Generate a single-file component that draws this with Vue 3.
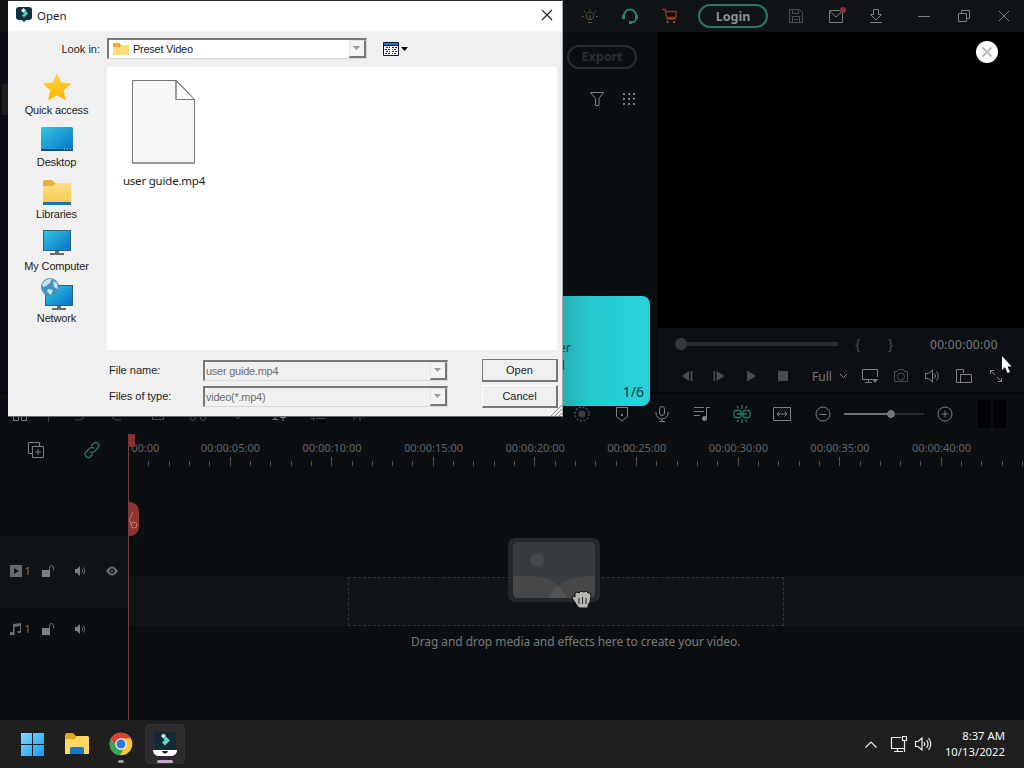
<script setup>
import { ref } from 'vue'

const labels = Array.from({ length: 9 }, (_, i) =>
  i === 0 ? '00:00' : `00:00:${String(i * 5).padStart(2, '0')}:00`
)
const ticks = Array.from({ length: 45 }, (_, i) => ({
  x: Math.round(i * 20.32) + 0.5,
  y: i % 5 === 0 ? 0 : 4
}))

const places = ['Quick access', 'Desktop', 'Libraries', 'My Computer', 'Network']
const fileName = ref('user guide.mp4')
const fileType = ref('video(*.mp4)')
</script>

<template>
  <div class="screen">
    <header class="titlebar">
      <span class="cell"
        ><svg width="18" height="18" class="bulb">
          <path d="M7 12.500C4 9 5.500 5 9 5s5 4 2 7.500zM7 15.500h4M9 12V8M1 9.500h2M15 9.500h2M3 4l1.500 1.500M15 4l-1.500 1.500M9 2v1.500" /></svg
      ></span>
      <span class="cell"
        ><svg width="18" height="18" class="headset">
          <path d="M3 11V8.500a6 6 0 0 1 12 0V11M15 11c0 3-2 4.500-5 4.500" />
          <path d="M2.500 8v4M15.500 8v4M8 15.500h3" class="thick" /></svg
      ></span>
      <span class="cell"
        ><svg width="18" height="18" class="cart">
          <path d="M1 2.500h3l2 9.500h8.500M5 4.500h10v6H6.500" />
          <path d="M5.500 15h2M12 15h2" class="thick" /></svg
      ></span>
      <button class="pill login">Login</button>
      <span class="cell"
        ><svg width="18" height="18" class="dim">
          <path d="M2.500 2.500h10l3 3v10h-13zM5.500 2.500v4h6v-4M5.500 15.500v-6h7v6M7 12.500h4" /></svg
      ></span>
      <span class="cell"
        ><svg width="20" height="18">
          <path d="M3.500 3.500h13v12h-13zM3.500 4l6.500 6 6.500-6" />
          <circle cx="17" cy="3" r="3" class="dot" /></svg
      ></span>
      <span class="cell"
        ><svg width="18" height="18"><path d="M6.500 2.500h5v5h3L9 13 3.500 7.500h3zM3 15.500h12" /></svg
      ></span>
      <span class="cell first"><svg width="18" height="18"><path d="M3 9.500h12" /></svg></span>
      <span class="cell"
        ><svg width="18" height="18"><path d="M3.500 6.500h8v8h-8zM6.500 6V3.500h8v8H12" /></svg
      ></span>
      <span class="cell"
        ><svg width="18" height="18"><path d="M4 4l10 10M14 4L4 14" /></svg
      ></span>
    </header>

    <main class="main">
      <section class="media">
        <i class="tab"></i>
        <div class="media-tools">
          <button class="pill export">Export</button>
          <div class="filters">
            <svg width="18" height="18">
              <path d="M2.500 2.500h13L11 8.500v7H7.500v-7z" />
            </svg>
            <svg width="14" height="14" class="solid">
              <path d="M1 1h2v2H1zM6 1h2v2H6zM11 1h2v2h-2zM1 6h2v2H1zM6 6h2v2H6zM11 6h2v2h-2zM1 11h2v2H1zM6 11h2v2H6zM11 11h2v2h-2z" />
            </svg>
          </div>
        </div>
      </section>
      <section class="preview">
        <div class="video">
          <button class="round">
            <svg width="12" height="12"><path d="M1.500 1.500l9 9M10.500 1.500l-9 9" /></svg>
          </button>
        </div>
        <div class="seek">
          <span class="seek-bar"></span>
          <span class="brace">{</span><span class="brace second">}</span>
          <time>00:00:00:00</time>
        </div>
        <div class="controls">
          <span class="ctl"><svg width="14" height="14" class="muted"><path d="M9 2v10L2 7zM10.500 2h2v10h-2z" /></svg></span>
          <span class="ctl"><svg width="14" height="14" class="muted"><path d="M1.500 2h1.500v10H1.500zM4.500 2l8 5-8 5z" /></svg></span>
          <span class="ctl"><svg width="14" height="14" class="muted"><path d="M3 1.500L12 7 3 12.500z" /></svg></span>
          <span class="ctl"><svg width="14" height="14" class="muted"><path d="M2 2h10v10H2z" /></svg></span>
          <span class="quality"
            >Full
            <svg width="9" height="6"><path d="M1 1l3.500 3.500L8 1" /></svg
          ></span>
          <span class="ctl"
            ><svg width="20" height="18">
              <path d="M17.500 10V2.500h-15v10H12M5 15.500h7M8.500 13v2" />
              <path d="M12 12h6l-3 4z" class="fill" /></svg
          ></span>
          <span class="ctl camera"
            ><svg width="18" height="16" class="dim">
              <path d="M2.500 3.500h3l1-2h5l1 2h3v10h-13z" />
              <circle cx="9" cy="8.500" r="3.500" /></svg
          ></span>
          <span class="ctl"
            ><svg width="18" height="18">
              <path d="M2.500 6.500H5L9.500 3v12L5 11.500H2.500zM11.500 6.500q2 2.500 0 5M13.500 4.500q3.500 4.500 0 9" /></svg
          ></span>
          <span class="ctl"
            ><svg width="18" height="16">
              <path d="M8 14.500H1.500v-13h7V5M5.500 6.500h11v8h-11z" /></svg
          ></span>
          <span class="ctl"
            ><svg width="16" height="16">
              <path d="M2.500 6V2.500H6M2.500 2.500l4.500 4.500M9 9l4.500 4.500M10 13.500h3.500V10" /></svg
          ></span>
        </div>
      </section>
    </main>

    <div class="toolbar">
      <span class="cell"><svg width="18" height="18"><path d="M2.500 2.500h5v5h-5zM10.500 2.500h5v5h-5zM2.500 9.500h5v6h-5zM10.500 9.500h5v6h-5z" /></svg></span>
      <i class="divider"></i>
      <span class="cell"><svg width="18" height="18" class="dim"><path d="M6 3L3 6l3 3M3 6h8q4 0 4 4t-4 5H6" /></svg></span>
      <span class="cell"><svg width="18" height="18" class="dim"><path d="M12 3l3 3-3 3M15 6H7q-4 0-4 4t4 5h5" /></svg></span>
      <span class="cell"><svg width="18" height="18" class="dim"><path d="M3.500 5.500h11v9h-11zM6 3.500h6M7 8v4M11 8v4" /></svg></span>
      <span class="cell"><svg width="18" height="18" class="dim"><path d="M4 3l8 9M14 3l-8 9" /><circle cx="4" cy="13" r="2.500" /><circle cx="14" cy="13" r="2.500" /></svg></span>
      <span class="cell"><svg width="18" height="18" class="dim"><path d="M3 8l6-6 6 6-6 6z" /></svg></span>
      <span class="cell"><svg width="18" height="18"><path d="M2 3.500h8M6 3v11M3.500 14.500H9M14 9v7M11 12.500h6" /></svg></span>
      <span class="cell"><svg width="18" height="18" class="dim"><path d="M2 13.500h3M7 13.500h9M5 11v5" /></svg></span>
      <span class="cell"><svg width="18" height="18" class="dim"><path d="M2 7v4M5 4v11M8 6v7M11 3v13M14 6v7" /></svg></span>

      <span class="cell right"
        ><svg width="18" height="18" class="dim">
          <circle cx="9" cy="9" r="7" stroke-dasharray="2 1.700" stroke-width="1.500" />
          <circle cx="9" cy="9" r="3.500" class="fill" /></svg
      ></span>
      <span class="cell"
        ><svg width="18" height="18">
          <path d="M3.500 2.500h11v9L9 16l-5.500-4.500z" />
          <path d="M8 9h2v2H8z" class="fill" /></svg
      ></span>
      <span class="cell"
        ><svg width="18" height="18">
          <rect x="6.500" y="1.500" width="5" height="9" rx="2.500" />
          <path d="M3 7v1.500a6 5.500 0 0 0 12 0V7M9 14v3M6 16.500h6" /></svg
      ></span>
      <span class="cell"
        ><svg width="18" height="18">
          <path d="M1 2.500h10M1 6.500h10M1 10.500h6M13.500 14V2.500H17" />
          <circle cx="11.500" cy="13.500" r="2.500" class="fill" /></svg
      ></span>
      <span class="cell"
        ><svg width="20" height="20" class="green">
          <rect x="2" y="6.500" width="7" height="7" rx="1.500" />
          <rect x="11" y="6.500" width="7" height="7" rx="1.500" />
          <path d="M5 10h10M10 1v4M10 15v4M5 2l1.500 2.500M15 2l-1.500 2.500M5 18l1.500-2.500M15 18l-1.500-2.500" /></svg
      ></span>
      <span class="cell"
        ><svg width="20" height="16">
          <path d="M1.500 1.500h17v13h-17zM5 8h10M7.500 5.500L5 8l2.500 2.500M12.500 5.500L15 8l-2.500 2.500" /></svg
      ></span>
      <span class="zoom-cell"
        ><svg width="16" height="16"><circle cx="8" cy="8" r="7" /><path d="M4.500 8.500h7" /></svg
      ></span>
      <span class="zoom-slider"></span>
      <span class="zoom-cell plus"
        ><svg width="16" height="16"><circle cx="8" cy="8" r="7" /><path d="M4.500 8h7M8 4.500v7" /></svg
      ></span>
      <span class="meters"><i></i><i></i></span>
    </div>

    <section class="timeline">
      <aside class="heads">
        <div class="heads-top">
          <svg width="18" height="18">
            <path d="M5 12.500H1.500v-11h11V5M5.500 5.500h11v11h-11zM11 8v6M8 11h6" />
          </svg>
          <svg width="18" height="18" class="green">
            <path d="M8 5l3-3q2-1.500 4 .5t.5 4l-4.500 4.500q-2 1.500-4-.5M10 13l-3 3q-2 1.500-4-.5t-.5-4L7 7q2-1.500 4 .5" />
          </svg>
        </div>
        <div class="head video-head">
          <span class="num"><svg width="13" height="12" class="solid"><path d="M0 0h12v12H0zM4 3v6l5-3z" fill-rule="evenodd" /></svg>1</span>
          <span><svg width="14" height="14"><path d="M1 6h8v7H1zM4.500 9h1.500v2H4.500z" class="fill" /><path d="M8.500 6V4q0-2.500 2-2.500t2 2.500v2.500" /></svg></span>
          <span><svg width="12" height="12"><path d="M1 4h2l3-3v10L3 8H1z" class="fill" /><path d="M8 4q1.500 2 0 4M9.500 2.500q3 3.500 0 7" /></svg></span>
          <span><svg width="14" height="10" class="solid"><path d="M1 5q6-9 12 0-6 9-12 0zM7 2.500a2.500 2.500 0 1 0 .1 0zM7 4a1 1 0 1 1-.1 0z" fill-rule="evenodd" /></svg></span>
        </div>
        <div class="head audio-head">
          <span class="num"><svg width="13" height="12" class="solid"><path d="M3 1l8-1v10H7.500V8H10V3L4.500 4v8H0V9h3z" /></svg>1</span>
          <span><svg width="14" height="14"><path d="M1 6h8v7H1zM4.500 9h1.500v2H4.500z" class="fill" /><path d="M8.500 6V4q0-2.500 2-2.500t2 2.500v2.500" /></svg></span>
          <span><svg width="12" height="12"><path d="M1 4h2l3-3v10L3 8H1z" class="fill" /><path d="M8 4q1.500 2 0 4M9.500 2.500q3 3.500 0 7" /></svg></span>
        </div>
      </aside>
      <div class="tracks">
        <div class="ruler">
          <div class="labels">
            <span v-for="label in labels" :key="label">{{ label }}</span>
          </div>
          <svg width="896" height="10" class="ticks">
            <path v-for="t in ticks" :key="t.x" :d="`M${t.x} ${t.y}V9`" />
          </svg>
        </div>
        <div class="track">
          <div class="drop"></div>
        </div>
        <p class="hint">Drag and drop media and effects here to create your video.</p>
        <svg class="picture" width="104" height="84">
          <rect x="6" y="4" width="92" height="64" rx="7" class="frame" />
          <rect x="11" y="8" width="82" height="56" rx="5" class="photo" />
          <circle cx="35" cy="26" r="7" class="sun" />
          <path d="M11 42h20q16 0 25 10 10-9 28-10h9v17q0 5-5 5H16q-5 0-5-5z" class="hill" />
          <path d="M46 64q4-8 10-12 5 4 9 12z" class="hill2" />
          <path d="M70 64l1-2 2 1v-4l2-1 2 1 2-2 3 1 2-1 2 2 2 0 1 3-1 6-2 3v3h-9l-3-4z" class="hand" />
          <path d="M77 64v6M80.500 63v7M84 64v6" class="fingers" />
        </svg>
        <i class="playhead"></i>
        <svg class="cutter" width="12" height="36">
          <path d="M0 1h3q8 2 8 10v14q0 8-8 10H0z" />
          <path d="M5 11L1 19l3 5" class="blade" />
          <circle cx="6" cy="24" r="3" class="blade" />
        </svg>
      </div>
    </section>

    <footer class="taskbar">
      <span class="task win"
        ><svg width="24" height="24">
          <defs>
            <linearGradient id="win" x2="1" y2="1">
              <stop stop-color="#7fdcfc" />
              <stop offset="1" stop-color="#1998ee" />
            </linearGradient>
          </defs>
          <path d="M1 1h11v11H1zM13 1h11v11H13zM1 13h11v11H1zM13 13h11v11H13z" fill="url(#win)" /></svg
      ></span>
      <span class="task"
        ><svg width="26" height="24">
          <path d="M1 3q0-2 2-2h6l3 3h11q2 0 2 2v16H1z" fill="#e0a520" />
          <path d="M1 7l10 0 2-3h10q2 0 2 2v15q0 1-1 1H2q-1 0-1-1z" fill="#ffd75e" />
          <path d="M6 22v-5q0-2 2-2h10q2 0 2 2v5z" fill="#1876c4" /></svg
      ></span>
      <span class="task"
        ><svg width="24" height="24">
          <circle cx="12" cy="12" r="11.300" fill="#fbc82f" />
          <path d="M2.200 6.300A11.300 11.300 0 0 1 21.800 6.300H12a5.700 5.700 0 0 0-5 8.500z" fill="#e53c30" />
          <path d="M2.200 6.300L7 14.800a5.700 5.700 0 0 0 7.500 2.300l-3.500 6.200A11.300 11.300 0 0 1 2.200 6.300z" fill="#35a552" />
          <circle cx="12" cy="12" r="5.700" fill="#f4f6f8" />
          <circle cx="12" cy="12" r="4.500" fill="#3175df" /></svg
        ><i class="open-mark"></i
      ></span>
      <span class="task active"
        ><svg width="24" height="24">
          <rect x="1" y="0" width="22" height="18" rx="2" fill="#122a36" />
          <path d="M8 4l2.500-2.500L13 4l-2.500 2.500z" fill="#e9fffb" />
          <path d="M13 4.500l4 4-5 5-3-3 2.500-2.500-1-1z" fill="#5cd3c3" />
          <path d="M0 18h24q0 5-5 6H5q-5-1-5-6z" fill="#fff" />
          <path d="M9 19h6l-1 2h-1l-1 1-1-1h-1z" fill="#222" /></svg
        ><i class="open-mark wide"></i
      ></span>
      <div class="tray">
        <svg width="14" height="9"><path d="M1.500 7.500L7 2l5.500 5.500" /></svg>
        <svg width="18" height="18" class="net">
          <path d="M11 2.500H1.500v11H14M7.500 14v2.500M4 16.500h9M12.500 1.500h4v4h-4zM14.500 6v11" />
        </svg>
        <svg width="18" height="18" class="vol">
          <path d="M1.500 6.500H4L8 3v12l-4-3.500H1.500zM10 7q1.500 2 0 4M12.500 5q3 4 0 8M14.500 3q4.500 6 0 12" />
        </svg>
        <div class="clock"><span>8:37 AM</span><span>10/13/2022</span></div>
      </div>
    </footer>

    <div class="guide">
      <div class="guide-text"><span>er</span><span>d</span></div>
      <span class="guide-page">1/6</span>
    </div>

    <div class="dialog">
      <div class="dialog-title">
        <svg width="17" height="17">
          <rect x="0" y="0" width="16" height="13" rx="3" fill="#12303f" />
          <path d="M5 3.500L7.500 1 10 3.500 7.500 6z" fill="#eafffb" />
          <path d="M9 3l3 3.500-4 4-2-2 2-2-1-1.500z" fill="#54cdbb" />
          <path d="M1 13h14l-3 2H4z" fill="#e3e7e9" />
          <path d="M6 13h4l-2 2z" fill="#243640" />
        </svg>
        <span>Open</span>
        <svg width="12" height="12" class="x"><path d="M1 1l10 10M11 1L1 11" /></svg>
      </div>
      <div class="dialog-look">
        <label>Look in:</label>
        <div class="combo look">
          <svg width="16" height="14">
            <path d="M0 2q0-1 1-1h5l2 2h8v10H0z" fill="#e5ac31" />
            <path d="M0 5h7l1-2h8v10H0z" fill="#ffdc78" />
          </svg>
          <span>Preset Video</span>
          <i class="arrow"><svg width="8" height="5"><path d="M0 0h7L3.500 4z" /></svg></i>
        </div>
        <svg width="26" height="15" class="view">
          <path d="M.5 .5h15v13H.5z" fill="#fff" stroke="#101743" />
          <path d="M1 1h14v2H1z" fill="#2376bb" />
          <path d="M1 3.500h14" stroke="#101743" />
          <path d="M3 5h2v1H3zM6 5h1v1H6zM9 5h2v1H9zM12 5h2v1h-2zM2 7h2v1H2zM5 7h2v1H5zM9 7h1v1H9zM11 7h2v1h-2zM3 9h2v1H3zM6 9h1v1H6zM9 9h2v1H9zM12 9h2v1h-2zM2 11h2v1H2zM5 11h2v1H5zM9 11h1v1H9zM11 11h2v1h-2z" fill="#252554" />
          <path d="M18 5h7l-3.500 4z" />
        </svg>
      </div>
      <div class="dialog-body">
        <nav class="places">
          <div v-for="place in places" :key="place" class="place">
            <svg width="34" height="34" viewBox="0 0 34 34">
              <defs>
                <linearGradient id="screen" x2="1" y2="1">
                  <stop stop-color="#31c7df" />
                  <stop offset="1" stop-color="#0872c9" />
                </linearGradient>
                <linearGradient id="folder" x2="0" y2="1">
                  <stop stop-color="#ffe087" />
                  <stop offset="1" stop-color="#f4ca50" />
                </linearGradient>
                <linearGradient id="star" x2="0" y2="1">
                  <stop stop-color="#ffd23e" />
                  <stop offset="1" stop-color="#ffb600" />
                </linearGradient>
              </defs>
              <path
                v-if="place === 'Quick access'"
                d="M17 3l4.200 9.500 10.300 1-7.800 6.800 2.300 10.200-9-5.300-9 5.300 2.300-10.200-7.800-6.800 10.300-1z"
                fill="url(#star)"
              />
              <g v-else-if="place === 'Desktop'">
                <rect x="1" y="5" width="32" height="24" rx="1.500" fill="url(#screen)" />
                <path d="M1 27h32v1q0 1-1 1H2q-1 0-1-1z" fill="#064c89" />
                <path d="M24 27h1M27 27h1M30 27h1" stroke="#d9edfa" />
              </g>
              <g v-else-if="place === 'Libraries'">
                <path d="M3 8q0-2 2-2h7l3 3h14q2 0 2 2v17H3z" fill="#e7b133" />
                <path d="M3 12h10l3-3h13q2 0 2 2v18H3z" fill="url(#folder)" />
                <path d="M3 28h28v3H3z" fill="#1a71b8" />
              </g>
              <g v-else-if="place === 'My Computer'">
                <rect x="3.500" y="4.500" width="27" height="20" fill="url(#screen)" stroke="#35637b" />
                <path d="M15 25h4v2h5v2H10v-2h5z" fill="#646d74" />
              </g>
              <g v-else>
                <rect x="5.500" y="7.500" width="27" height="20" fill="url(#screen)" stroke="#35637b" />
                <path d="M17 28h4v2h5v2H12v-2h5z" fill="#646d74" />
                <circle cx="10" cy="9" r="9" fill="#4893be" />
                <path d="M2 6q5-6 10-5l-2 4-4 3-3 1zM8 11l5 1-2 5-4-3zM13 3l4 2 1 6-4-2z" fill="#c2e2ef" />
              </g>
            </svg>
            <span>{{ place }}</span>
          </div>
        </nav>
        <div class="files">
          <div class="file">
            <svg width="64" height="84">
              <path d="M.5 .5h44l18 19v63.500H.5z" fill="#f7f7f7" />
              <path d="M44 .5v19h18.500z" fill="#fff" />
              <path d="M.5 .5h43.500l18.500 19v63.500H.5zM44 .5v19h18.500" class="edge" />
            </svg>
            <span>{{ fileName }}</span>
          </div>
        </div>
      </div>
      <div class="dialog-form">
        <div class="field">
          <label>File name:</label>
          <div class="combo grey">
            <span>{{ fileName }}</span>
            <i class="arrow"><svg width="8" height="5"><path d="M0 0h7L3.500 4z" /></svg></i>
          </div>
          <button class="btn primary">Open</button>
        </div>
        <div class="field">
          <label>Files of type:</label>
          <div class="combo grey">
            <span>{{ fileType }}</span>
            <i class="arrow"><svg width="8" height="5"><path d="M0 0h7L3.500 4z" /></svg></i>
          </div>
          <button class="btn">Cancel</button>
        </div>
      </div>
      <svg class="grip" width="11" height="11"><path d="M0 11L11 0M4 11l7-7M8 11l3-3" /></svg>
    </div>

    <svg class="pointer" width="12" height="20">
      <path d="M1 1v14l3-3 2.500 6 2.500-1-2.500-5.500h4z" />
    </svg>
  </div>
</template>

<style>
body {
  background: #0b0f12;
  overflow: hidden;
}
</style>

<style scoped>
.screen {
  position: relative;
  display: flex;
  flex-direction: column;
  width: 1024px;
  height: 768px;
  overflow: hidden;
  background: #0b0f12;
  color: #777b7d;
  font-family: 'Noto Sans', sans-serif;
  font-size: 12px;
}
.screen * {
  box-sizing: border-box;
}
svg {
  display: block;
  flex: none;
  fill: none;
  stroke: #7d8183;
}
.solid,
.fill {
  fill: #7d8183;
  stroke: none;
}
.dim {
  stroke: #4b4f51;
}
.dim .fill {
  fill: #3c4042;
}
.muted {
  fill: #4a4c4e;
  stroke: none;
}
.green {
  stroke: #2b7967;
  stroke-width: 1.3;
}
button {
  font: inherit;
  padding: 0;
}

/* title bar */
.titlebar {
  display: flex;
  align-items: center;
  justify-content: flex-end;
  height: 32px;
  background: #101417;
}
.cell {
  display: flex;
  align-items: center;
  justify-content: center;
  width: 40px;
}
.cell.first {
  margin-left: 8px;
}
.bulb {
  stroke: #5d553d;
}
.headset {
  stroke: #2d806f;
  stroke-width: 1.8;
}
.headset .thick {
  stroke-width: 3;
}
.cart {
  stroke: #8a3828;
  stroke-width: 1.3;
}
.cart .thick {
  stroke: #9b5122;
  stroke-width: 2;
}
.dot {
  fill: #8f2c3d;
  stroke: none;
}
.pill {
  width: 70px;
  height: 24px;
  border: 2px solid #2b7766;
  border-radius: 12px;
  background: transparent;
  color: #8b9092;
  font-weight: bold;
  font-size: 12.5px;
  line-height: 19px;
}
.login {
  margin: 0 8px;
}

/* media and preview */
.main {
  display: flex;
  height: 362px;
  border-bottom: 2px solid #030506;
}
.media {
  display: flex;
  align-items: flex-start;
  justify-content: space-between;
  width: 657px;
  background: #0b0e13;
}
.tab {
  width: 8px;
  height: 31px;
  margin: 52px 0 0 2px;
  background: #1c1f21;
}
.media-tools {
  width: 90px;
  padding-top: 13px;
}
.export {
  border-color: #2c2f32;
  color: #2d3033;
  line-height: 20px;
}
.filters {
  display: flex;
  align-items: center;
  gap: 16px;
  margin: 21px 0 0 21px;
}
.preview {
  flex: 1;
  border-left: 1px solid #030405;
  background: #0c0f13;
}
.video {
  display: flex;
  justify-content: flex-end;
  height: 296px;
  padding: 9px 26px;
  background: #000;
}
.round {
  display: flex;
  align-items: center;
  justify-content: center;
  width: 22px;
  height: 22px;
  border: 0;
  border-radius: 50%;
  background: #fff;
}
.round svg {
  stroke: #bcbcbc;
  stroke-width: 2;
}
.seek {
  display: flex;
  align-items: center;
  height: 32px;
  padding-left: 17px;
}
.seek-bar {
  width: 163px;
  height: 12px;
  border-radius: 6px 0 0 6px;
  background:
    radial-gradient(circle at 6px 6px, #37393b 5.5px, transparent 6.5px),
    linear-gradient(#2b2d2f, #2b2d2f) 6px 4px / 157px 4px no-repeat;
}
.brace {
  width: 8px;
  margin-left: 17px;
  color: #4a4d50;
  font-size: 14px;
  line-height: 14px;
}
.second {
  margin-left: 25px;
}
.seek time {
  margin-left: 34px;
  font-size: 12px;
  letter-spacing: 0.3px;
}
.controls {
  display: flex;
  align-items: center;
  height: 32px;
  padding-left: 13px;
}
.ctl {
  display: flex;
  align-items: center;
  justify-content: center;
  width: 32px;
}
.camera {
  width: 30px;
}
.quality {
  display: flex;
  align-items: center;
  justify-content: space-between;
  width: 36px;
  margin: 0 6px 0 13px;
}

/* tool bar */
.toolbar {
  display: flex;
  align-items: center;
  height: 40px;
  background: #0a0d11;
}
.divider {
  width: 1px;
  height: 16px;
  margin: 0 9px 0 8px;
  background: #3c4042;
}
.right {
  margin-left: auto;
}
.zoom-cell {
  display: flex;
  justify-content: center;
  width: 42px;
}
.zoom-slider {
  width: 80px;
  height: 8px;
  background:
    radial-gradient(circle at 47px 4px, #777a7c 3.5px, transparent 4.3px),
    linear-gradient(90deg, #6c6f70 47px, #292c2e 47px) 0 3px / 80px 2px no-repeat;
}
.meters {
  display: flex;
  gap: 2px;
  margin: 0 18px 0 12px;
}
.meters i {
  width: 13px;
  height: 28px;
  background: #020304;
}

/* timeline */
.timeline {
  display: flex;
  height: 286px;
}
.heads {
  width: 128px;
}
.heads-top {
  display: flex;
  gap: 38px;
  height: 102px;
  padding: 7px 0 0 27px;
}
.head {
  display: flex;
  align-items: center;
}
.head span {
  display: flex;
  align-items: center;
  justify-content: center;
  width: 32px;
}
.head .num {
  gap: 2px;
  padding-left: 8px;
  font-size: 10px;
  line-height: 12px;
}
.head svg {
  stroke: #686c6e;
}
.head .solid {
  fill: #686c6e;
  stroke: none;
}
.video-head {
  height: 71px;
  padding-bottom: 2px;
  background: #101417;
}
.audio-head {
  height: 46px;
  padding-bottom: 1px;
  border-bottom: 1px solid #101315;
}
.tracks {
  position: relative;
  flex: 1;
  border-left: 1px solid #7a3a40;
  overflow: hidden;
}
.ruler {
  height: 143px;
}
.labels {
  display: flex;
  width: 950px;
  margin-left: -51px;
  padding-top: 6px;
  font-size: 11px;
  line-height: 16px;
  color: #616567;
}
.labels span {
  flex: 0 0 101.6px;
  text-align: center;
}
.labels span:first-child {
  padding-left: 33px;
}
.ticks {
  margin: 1px 0 0 -1px;
  stroke: #4d5153;
}
.track {
  height: 49px;
  padding-left: 219px;
  background: #101417;
}
.drop {
  width: 436px;
  height: 49px;
  border: 1px dashed #33373a;
}
.hint {
  width: 340px;
  margin: 6px 0 0 282px;
  font-size: 12px;
  line-height: 20px;
  letter-spacing: -0.07px;
  white-space: nowrap;
}
.picture {
  position: absolute;
  left: 373px;
  top: 100px;
  stroke: none;
}
.frame {
  fill: #25292c;
}
.photo {
  fill: #393c3e;
}
.sun,
.hill {
  fill: #454749;
}
.hill2 {
  fill: #525456;
}
.hand {
  fill: #b6b6b2;
  stroke: #101010;
}
.fingers {
  stroke: #292929;
}
.playhead {
  position: absolute;
  left: -1px;
  top: 0;
  width: 7px;
  height: 13px;
  background: #8c3032;
}
.cutter {
  position: absolute;
  left: -1px;
  top: 67px;
  fill: #8e3430;
  stroke: none;
}
.blade {
  fill: none;
  stroke: #c07b75;
}

/* task bar */
.taskbar {
  display: flex;
  align-items: center;
  height: 48px;
  padding-left: 10px;
  background: #1f1f1f;
}
.task {
  position: relative;
  display: flex;
  align-items: center;
  justify-content: center;
  width: 44px;
  height: 40px;
}
.task svg {
  stroke: none;
}
.win {
  margin-right: 1px;
}
.active {
  width: 40px;
  margin-left: 2px;
  border: 1px solid #343434;
  border-radius: 4px;
  background: #2c2c2c;
}
.open-mark {
  position: absolute;
  left: 19px;
  bottom: 1px;
  width: 6px;
  height: 3px;
  border-radius: 2px;
  background: #999;
}
.wide {
  left: 11px;
  bottom: 0;
  width: 16px;
  background: #c9a3cf;
}
.tray {
  display: flex;
  align-items: center;
  margin-left: auto;
  padding-right: 19px;
  color: #f5f5f5;
}
.tray svg {
  stroke: #ededed;
  stroke-width: 1.2;
}
.net {
  margin-left: 12px;
}
.vol {
  margin-left: 6px;
}
.clock {
  display: flex;
  flex-direction: column;
  align-items: flex-end;
  width: 73px;
  font-size: 11.3px;
  line-height: 16px;
}

/* guide card under the dialog */
.guide {
  position: absolute;
  left: 480px;
  top: 296px;
  display: flex;
  flex-direction: column;
  justify-content: space-between;
  width: 170px;
  height: 110px;
  padding: 43px 6px 4px 0;
  border-radius: 8px;
  background: linear-gradient(90deg, #27b0b0 83px, #27c8ce 110px, #26d1d9 150px);
  color: #11383d;
  font-size: 12.5px;
}
.guide-text {
  display: flex;
  flex-direction: column;
  align-items: flex-end;
  width: 91px;
  line-height: 18px;
}
.guide-text span:last-child {
  padding-right: 6px;
}
.guide-page {
  align-self: flex-end;
  font-size: 14px;
  line-height: 20px;
}

/* file dialog */
.dialog {
  position: absolute;
  left: 8px;
  top: 0;
  width: 555px;
  height: 417px;
  border-top: 1px solid #2e2a2e;
  border-right: 1px solid #a6a8a9;
  border-bottom: 1px solid #6a6c6d;
  background: #f0f0f0;
  color: #1c1c1c;
  font-family: 'Liberation Sans', sans-serif;
  font-size: 11px;
}
.dialog-title {
  display: flex;
  align-items: center;
  height: 30px;
  padding: 0 9px 0 8px;
  background: #fff;
  font-family: 'Noto Sans', sans-serif;
  font-size: 11.5px;
}
.dialog-title svg {
  margin-top: -2px;
  stroke: none;
}
.dialog-title span {
  margin: -1px 0 0 4px;
}
.dialog-title .x {
  margin: -2px 0 0 auto;
  stroke: #222;
  stroke-width: 1.1;
}
.dialog-look {
  display: flex;
  align-items: center;
  height: 36px;
}
.dialog-look label {
  width: 99px;
  padding-right: 7px;
  text-align: right;
}
.combo {
  display: flex;
  align-items: center;
  width: 245px;
  height: 21px;
  padding-left: 1px;
  border: 1px solid #d8d8d8;
  border-top: 2px solid #777;
  border-left: 2px solid #777;
  letter-spacing: -0.25px;
}
.combo svg {
  stroke: none;
}
.look {
  width: 260px;
  margin-top: -1px;
  padding-left: 4px;
  background: #fff;
}
.look span {
  margin-left: 4px;
}
.grey {
  color: #6e6e6e;
}
.arrow {
  display: flex;
  align-items: center;
  justify-content: center;
  width: 17px;
  height: 18px;
  margin-left: auto;
  border: 1px solid #e3e3e3;
  border-right: 2px solid #777;
  border-bottom: 2px solid #777;
  background: #f3f3f3;
}
.arrow svg {
  fill: #9a9a9a;
}
.view {
  margin-left: 16px;
  fill: #000;
  stroke: none;
}
.dialog-body {
  display: flex;
  height: 283px;
}
.places {
  width: 99px;
  padding-top: 3px;
}
.place {
  display: flex;
  flex-direction: column;
  align-items: center;
  width: 97px;
  height: 52px;
  letter-spacing: -0.15px;
}
.place svg {
  stroke: none;
}
.place span {
  margin-top: -1px;
  line-height: 14px;
}
.files {
  width: 450px;
  padding: 13px 0 0 14px;
  background: #fff;
}
.file {
  display: flex;
  flex-direction: column;
  align-items: center;
  width: 84px;
  margin-left: 1px;
  font-family: 'Noto Sans', sans-serif;
  font-size: 11.5px;
}
.file span {
  margin-top: 9px;
  line-height: 16px;
  letter-spacing: -0.2px;
  white-space: nowrap;
}
.file .edge {
  stroke: #777;
}
.dialog-form {
  padding: 7px 0 0 101px;
}
.field {
  display: flex;
  align-items: center;
  height: 26px;
}
.field label {
  width: 94px;
}
.btn {
  width: 76px;
  height: 23px;
  margin-left: 34px;
  border: 1px solid #fff;
  border-right: 2px solid #777;
  border-bottom: 2px solid #777;
  background: #f0f0f0;
  color: #1c1c1c;
}
.primary {
  border-top-color: #777;
  border-left-color: #777;
}
.grip {
  position: absolute;
  right: 0;
  bottom: 0;
  stroke: #8a8a8a;
}
.pointer {
  position: absolute;
  left: 1001px;
  top: 355px;
  fill: #fff;
  stroke: none;
}
</style>
